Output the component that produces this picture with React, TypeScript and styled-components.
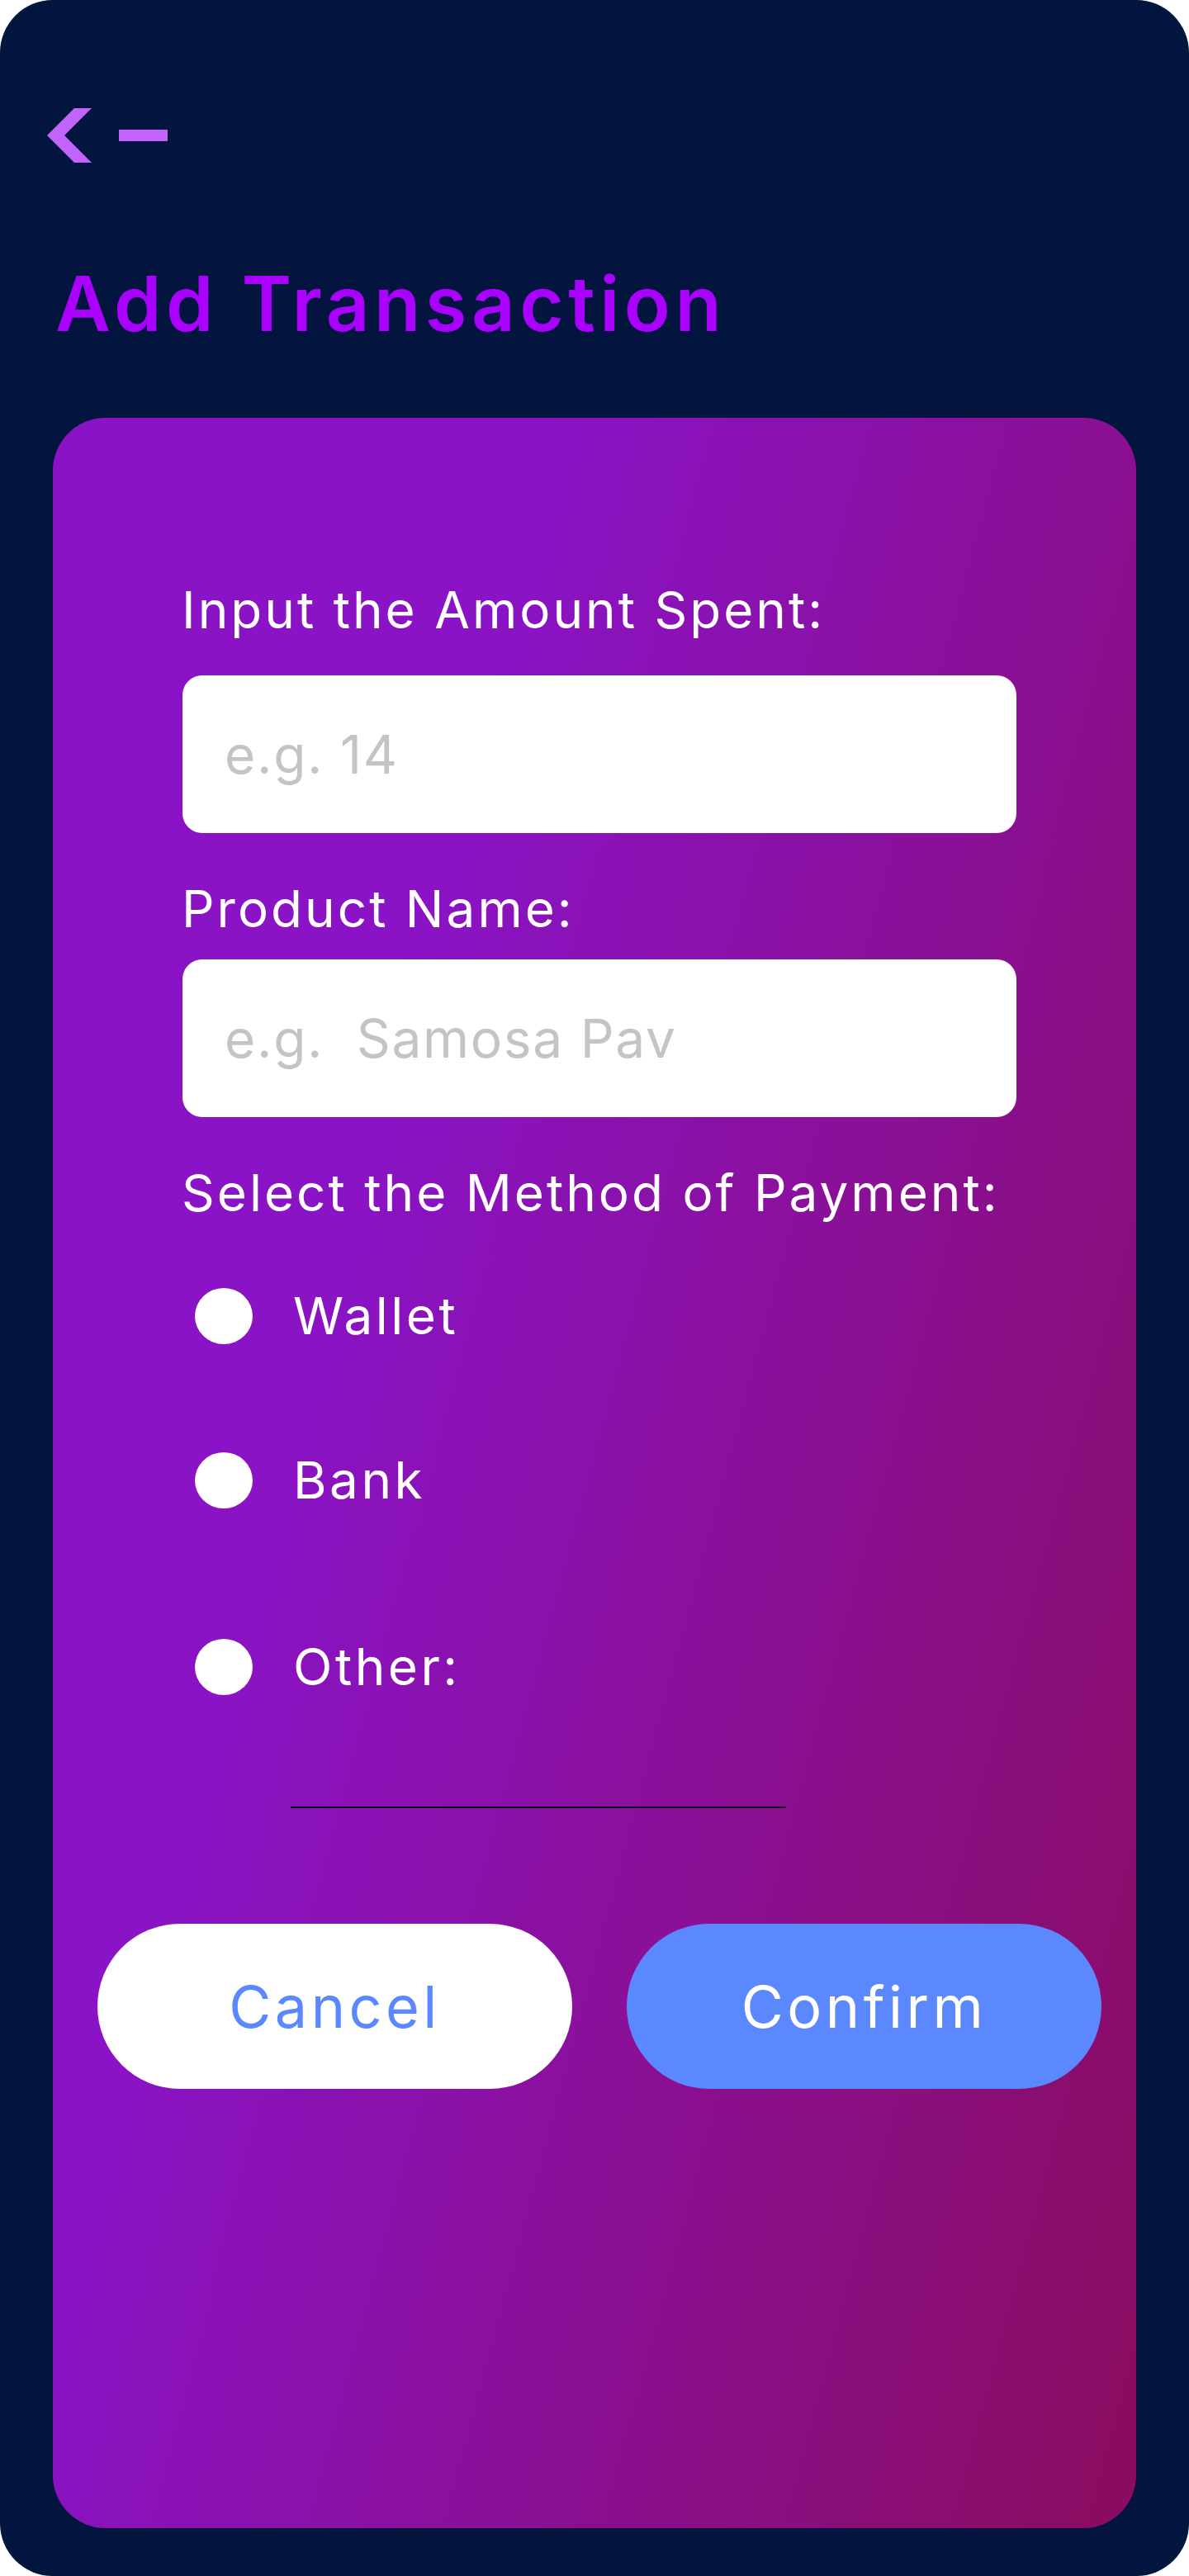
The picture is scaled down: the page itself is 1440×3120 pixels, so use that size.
import { FC } from "react";
import styled, { createGlobalStyle } from "styled-components";

const GlobalStyle = createGlobalStyle`
  body {
    margin: 0;
    background: #ffffff;
    font-family: "Inter", "Noto Sans", sans-serif;
  }
  * {
    box-sizing: border-box;
  }
`;

const Screen = styled.div`
  width: 1440px;
  height: 3120px;
  background: #03153f;
  border-radius: 64px;
  padding-top: 131px;
  display: flex;
  flex-direction: column;
`;

const BackButton = styled.button`
  margin-left: 57px;
  width: 146px;
  height: 66px;
  padding: 0;
  border: none;
  background: none;
  cursor: pointer;
  display: flex;
`;

const Title = styled.h1`
  margin: 125px 0 0 67px;
  font-size: 92px;
  line-height: 1;
  font-weight: 600;
  color: #aa00ff;
  letter-spacing: 5.5px;
`;

const Card = styled.form`
  flex: 1;
  margin: 92px 64px 58px;
  border-radius: 64px;
  background: linear-gradient(105deg, #8a13c6 30%, #8a0c5e 100%);
  padding: 202px 0 0 156px;
  display: flex;
  flex-direction: column;
`;

const Label = styled.label<{ $top?: number }>`
  margin: ${(p) => p.$top ?? 0}px 0 0;
  font-size: 62px;
  line-height: 1;
  letter-spacing: 3px;
  color: #ffffff;
`;

const TextInput = styled.input<{ $top?: number }>`
  margin: ${(p) => p.$top ?? 0}px 0 0 1px;
  width: 1010px;
  height: 191px;
  border: none;
  border-radius: 24px;
  background: #ffffff;
  padding: 0 0 0 51px;
  font-family: inherit;
  font-size: 64px;
  letter-spacing: 1.7px;
  color: #333;
  outline: none;
  &::placeholder {
    color: #c4c4c4;
  }
`;

const RadioRow = styled.label<{ $top: number }>`
  margin: ${(p) => p.$top}px 0 0 16px;
  height: 68px;
  display: flex;
  align-items: center;
  gap: 49px;
  font-size: 62px;
  line-height: 1;
  letter-spacing: 3.5px;
  color: #ffffff;
`;

const Radio = styled.input`
  appearance: none;
  margin: 0;
  width: 70px;
  height: 68px;
  border-radius: 50%;
  background: #ffffff;
  flex-shrink: 0;
`;

const OtherInput = styled.input`
  margin: 135px 0 0 132px;
  width: 600px;
  height: 2px;
  padding: 0;
  border: none;
  border-bottom: 2px solid #0a0018;
  background: transparent;
  outline: none;
`;

const ButtonRow = styled.div`
  margin: 140px 0 0 -102px;
  display: flex;
  gap: 66px;
`;

const PillButton = styled.button<{ $primary?: boolean }>`
  width: 575px;
  height: 200px;
  border: none;
  border-radius: 100px;
  background: ${(p) => (p.$primary ? "#5b87ff" : "#ffffff")};
  color: ${(p) => (p.$primary ? "#ffffff" : "#5b87ff")};
  font-family: inherit;
  font-size: 70px;
  font-weight: 400;
  letter-spacing: 4.5px;
  cursor: pointer;
`;

const BackIcon: FC = () => (
  <svg width="146" height="66" viewBox="0 0 146 66" aria-hidden="true">
    <polygon points="33,0 54,0 21,33 54,66 33,66 0,33" fill="#c263fb" />
    <rect x="87" y="26" width="59" height="14" fill="#c263fb" />
  </svg>
);

export default function App() {
  return (
    <>
      <GlobalStyle />
      <Screen>
        <BackButton type="button" aria-label="Back">
          <BackIcon />
        </BackButton>
        <Title>Add Transaction</Title>
        <Card onSubmit={(e) => e.preventDefault()}>
          <Label htmlFor="amount">Input the Amount Spent:</Label>
          <TextInput id="amount" $top={48} placeholder="e.g. 14" />
          <Label htmlFor="product" $top={61}>
            Product Name:
          </Label>
          <TextInput id="product" $top={30} placeholder="e.g.  Samosa Pav" />
          <Label as="p" $top={61}>
            Select the Method of Payment:
          </Label>
          <RadioRow $top={84}>
            <Radio type="radio" name="method" value="wallet" />
            Wallet
          </RadioRow>
          <RadioRow $top={131}>
            <Radio type="radio" name="method" value="bank" />
            Bank
          </RadioRow>
          <RadioRow $top={158}>
            <Radio type="radio" name="method" value="other" />
            Other:
          </RadioRow>
          <OtherInput aria-label="Other method" />
          <ButtonRow>
            <PillButton type="button">Cancel</PillButton>
            <PillButton type="submit" $primary>
              Confirm
            </PillButton>
          </ButtonRow>
        </Card>
      </Screen>
    </>
  );
}
